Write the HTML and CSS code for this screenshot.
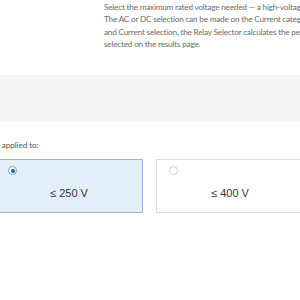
FILE: index.html
```html
<!DOCTYPE html>
<html lang="en">
<head>
  <meta charset="UTF-8" />
  <meta name="viewport" content="width=device-width, initial-scale=1" />
  <title>Relay Selector - Voltage</title>
  <link rel="stylesheet" href="styles.css">
</head>
<body>
  <div class="intro">
    <p class="intro-text">
      Select the maximum rated voltage needed — a high-voltage relay may be required.<br>
      The AC or DC selection can be made on the Current category page. Based on Voltage<br>
      and Current selection, the Relay Selector calculates the performance and shows it<br>
      selected on the results page.
    </p>
  </div>

  <div class="band"></div>

  <div class="question">
    <div class="label-row">
      <p class="label">Select the maximum voltage applied to:</p>
    </div>
    <div class="options">
      <label class="option selected">
        <span class="radio"></span>
        <span class="value">≤ 250 V</span>
      </label>
      <label class="option">
        <span class="radio"></span>
        <span class="value">≤ 400 V</span>
      </label>
    </div>
  </div>
</body>
</html>
```

FILE: styles.css
```css
html, body {
  margin: 0;
  padding: 0;
  background: #fff;
  overflow: hidden;
}
body {
  width: 300px;
  height: 300px;
  font-family: Lato, "Open Sans", sans-serif;
}
.intro {
  height: 75px;
  padding-left: 104px;
  box-sizing: border-box;
  overflow: hidden;
}
.intro-text {
  margin: 0;
  padding-top: 1px;
  font-size: 8.2px;
  line-height: 12.3px;
  letter-spacing: -0.2px;
  color: #6a6a6a;
  white-space: nowrap;
}
.band {
  height: 47px;
  background: #f4f4f4;
}
.question {
  padding-top: 17px;
}
/* the label is clipped on the left, only its end shows */
.label-row {
  display: flex;
  justify-content: flex-end;
  width: 38.5px;
}
.label {
  flex-shrink: 0;
  margin: 0;
  font-size: 8.2px;
  line-height: 12px;
  letter-spacing: -0.1px;
  color: #555;
  white-space: nowrap;
}
.options {
  display: flex;
  gap: 13px;
  margin-top: 8px;
  margin-left: -5px;
}
.option {
  position: relative;
  width: 148px;
  height: 54px;
  box-sizing: border-box;
  border: 1px solid #dcdcdc;
  background: #fff;
  display: flex;
  justify-content: center;
  align-items: center;
  flex-shrink: 0;
}
.option.selected {
  background: #e2eef8;
  border-color: #9ab7d1;
}
.radio {
  position: absolute;
  left: 12px;
  top: 6px;
  width: 9px;
  height: 9px;
  box-sizing: border-box;
  border: 1px solid #cfcfcf;
  border-radius: 50%;
  background: #fff;
}
.option.selected .radio {
  border-color: #6d9fcb;
}
.option.selected .radio::after {
  content: "";
  position: absolute;
  left: 1.5px;
  top: 1.5px;
  width: 4px;
  height: 4px;
  border-radius: 50%;
  background: #1d5b94;
}
.value {
  margin-top: 14px;
  font-family: "Liberation Sans", Arial, sans-serif;
  font-size: 11px;
  color: #333;
}
```
